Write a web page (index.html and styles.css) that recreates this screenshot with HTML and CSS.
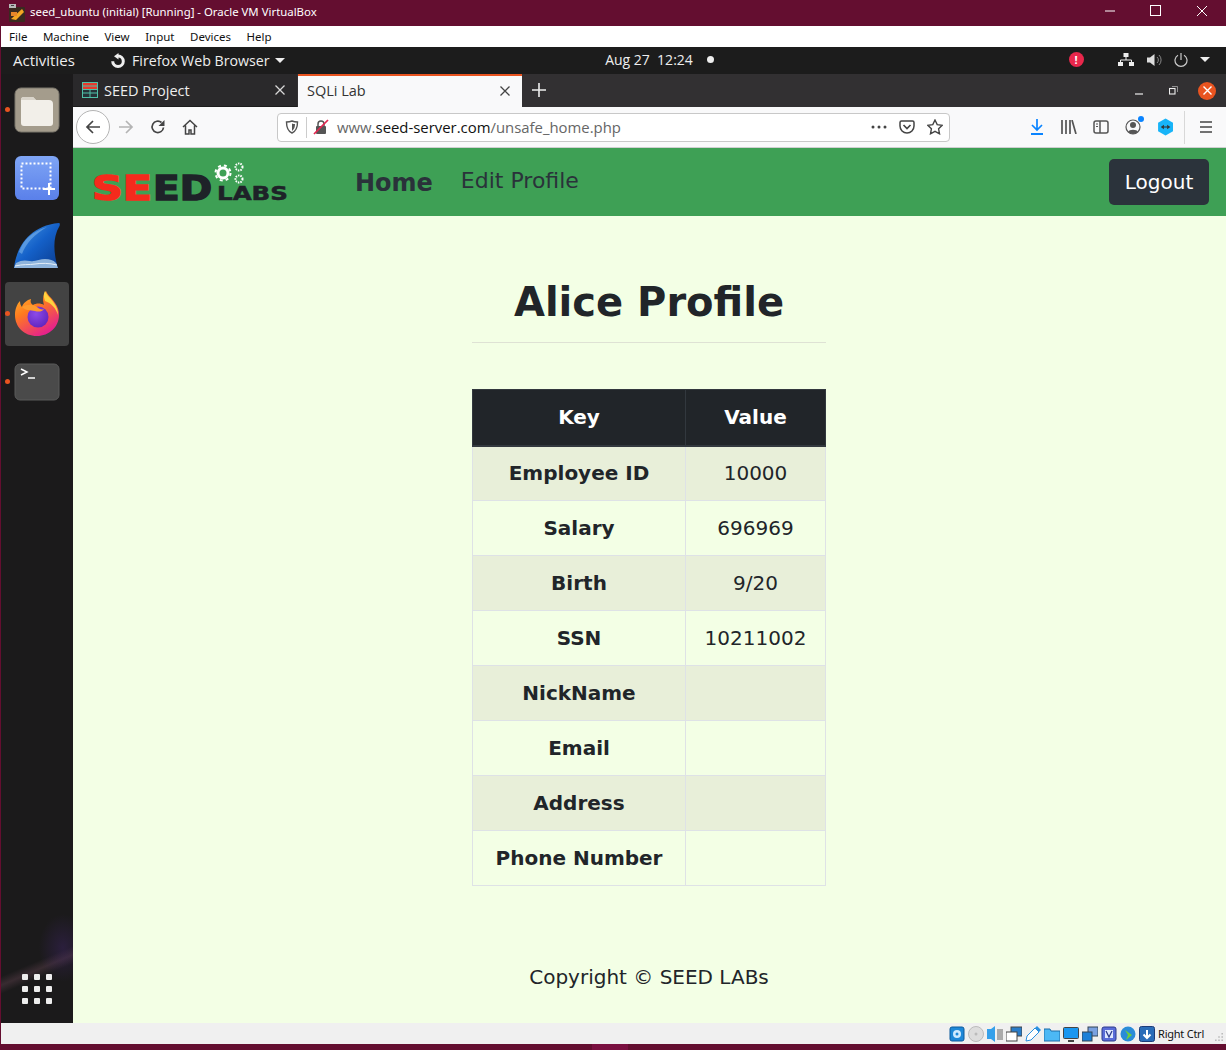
FILE: index.html
```html
<!DOCTYPE html>
<html lang="en">
<head>
<meta charset="utf-8">
<title>seed_ubuntu (initial) [Running] - Oracle VM VirtualBox</title>
<link rel="stylesheet" href="styles.css">
</head>
<body>
<div class="host">
  <header class="titlebar">
    <svg class="vbox-logo" width="18" height="18" viewBox="0 0 18 18"><rect x="1" y="3" width="16" height="15" rx="1" fill="#3a2a20"/><path d="M3 15l11-10 2 3-8 8z" fill="#f5a623"/><path d="M3 8h6v4H3z" fill="#e8862a"/><rect x="1" y="0" width="7" height="4" fill="#b8b8b8"/><rect x="3" y="1" width="3" height="1" fill="#444"/></svg>
    <span class="title-text">seed_ubuntu (initial) [Running] - Oracle VM VirtualBox</span>
    <div class="win-controls">
      <svg width="12" height="12" viewBox="0 0 12 12"><path d="M1 6h10" stroke="#fff" fill="none"/></svg>
      <svg width="12" height="12" viewBox="0 0 12 12"><rect x=".5" y=".5" width="10" height="10" stroke="#fff" fill="none"/></svg>
      <svg width="12" height="12" viewBox="0 0 12 12"><path d="M1 1l10 10M11 1L1 11" stroke="#fff" fill="none"/></svg>
    </div>
  </header>
  <nav class="menubar"><span>File</span><span>Machine</span><span>View</span><span>Input</span><span>Devices</span><span>Help</span></nav>

  <div class="guest">
    <div class="topbar">
      <span class="activities">Activities</span>
      <div class="appmenu">
        <svg width="16" height="16" viewBox="0 0 16 16"><path d="M8 3a5.300 5.300 0 1 1-5.300 5.300" fill="none" stroke="#eee" stroke-width="3"/><path d="M8.500 0L4 3.200 8.500 6.500z" fill="#eee"/></svg>
        <span>Firefox Web Browser</span>
        <i class="caret"></i>
      </div>
      <div class="clock"><span>Aug 27&nbsp; 12:24</span><i class="clock-dot"></i></div>
      <div class="tray">
        <span class="alert">!</span>
        <svg class="t-net" width="16" height="13" viewBox="0 0 16 13"><path d="M5.500 0h5v4h-5zM0 9h5v4H0zM11 9h5v4h-5z" fill="#eee"/><path d="M8 4v3M2.500 9V7h11v2" stroke="#eee" fill="none"/></svg>
        <svg class="t-vol" width="15" height="14" viewBox="0 0 15 14"><path d="M0 4.500h3L7.500 1v12L3 9.500H0z" fill="#ddd"/><path d="M10 4a4 4 0 0 1 0 6M12 2a7 7 0 0 1 0 10" stroke="#888" fill="none"/></svg>
        <svg class="t-pow" width="14" height="14" viewBox="0 0 14 14"><path d="M4 2.200a6 6 0 1 0 6 0M7 0v7" stroke="#ccc" stroke-width="1.200" fill="none"/></svg>
        <i class="caret"></i>
      </div>
    </div>

    <div class="desktop">
      <aside class="dock">
        <div class="dock-item"><i class="run-dot"></i>
          <svg width="46" height="46" viewBox="0 0 46 46"><rect x="1" y="1" width="44" height="44" rx="6" fill="#a49c8c" stroke="#7b766c"/><path d="M7 13a3 3 0 0 1 3-3h9l3 3h13a4 4 0 0 1 4 4v19a3 3 0 0 1-3 3H10a3 3 0 0 1-3-3z" fill="#f2efe9"/><path d="M7 13a3 3 0 0 1 3-3h9l3 3z" fill="#d9d4ca"/></svg>
        </div>
        <div class="dock-item">
          <svg width="46" height="46" viewBox="0 0 46 46"><defs><linearGradient id="sg" x1="0" y1="0" x2="0" y2="1"><stop offset="0" stop-color="#7fa5f5"/><stop offset="1" stop-color="#5a80ea"/></linearGradient></defs><rect x="1" y="1" width="44" height="44" rx="6" fill="url(#sg)"/><rect x="7.500" y="8.500" width="29" height="25" fill="none" stroke="#fff" stroke-width="2" stroke-dasharray="2 2"/><path d="M35 28v12M29 34h12" stroke="#fff" stroke-width="2"/></svg>
        </div>
        <div class="dock-item">
          <svg width="48" height="48" viewBox="0 0 48 48"><defs><linearGradient id="fin" x1="0" y1="0" x2="1" y2="1"><stop offset="0" stop-color="#4a9ce8"/><stop offset=".5" stop-color="#1460c8"/><stop offset="1" stop-color="#0a3a8c"/></linearGradient></defs><path d="M1 46C3 28 14 4 46 1c1 0 1 2 .5 3C38 18 42 36 45 46z" fill="url(#fin)"/><path d="M3 41c5-3 9-3 14-2s10-2 15-2 8 1 11 4l2 5H1z" fill="#8fb4dc"/><path d="M2 44c8-2 14-1 20-2s14-1 22 1" fill="none" stroke="#e4eef8"/><path d="M6 30C10 18 20 9 34 5 22 12 13 21 9 32z" fill="#8cc0f0" opacity=".5"/></svg>
        </div>
        <div class="dock-item active"><i class="run-dot"></i>
          <svg width="46" height="46" viewBox="0 0 46 46"><defs><linearGradient id="ff" x1="0" y1="0" x2=".6" y2="1"><stop offset="0" stop-color="#ffbd2e"/><stop offset=".45" stop-color="#ff7a1f"/><stop offset="1" stop-color="#e5218c"/></linearGradient><radialGradient id="ffb" cx=".4" cy=".35" r=".8"><stop offset="0" stop-color="#8c4ae8"/><stop offset="1" stop-color="#5a1fb8"/></radialGradient></defs><path d="M23 45C10 45 1 36 1 24c0-6 2-11 5-14 0 3 1 5 2 6 1-4 5-7 9-8-1 3 0 5 2 6 3-2 8-2 11 0-1-4-2-9 2-14 2 5 6 7 9 12 3 4 4 8 4 12 0 12-10 21-22 21z" fill="url(#ff)"/><path d="M31 0c2 5 6 7 9 12 3 4 4 8 4 12-2-7-7-12-13-14-1-4-2-6 0-10z" fill="#ffd23f"/><circle cx="24" cy="26" r="10.500" fill="url(#ffb)"/><path d="M8 16c5-3 11-3 15 0 2 2 5 3 7 2-2 3-6 3-9 2-5-1-9 0-13-4z" fill="#ff9a2e"/></svg>
        </div>
        <div class="dock-item"><i class="run-dot"></i>
          <svg width="46" height="46" viewBox="0 0 46 46"><rect x="1" y="5" width="44" height="36" rx="5" fill="#4a4a4a" stroke="#5a5a5a"/><path d="M7 10l6 3-6 3" stroke="#fff" stroke-width="1.500" fill="none"/><path d="M14 19h7" stroke="#fff" stroke-width="1.500"/></svg>
        </div>
        <div class="apps-grid"><i></i><i></i><i></i><i></i><i></i><i></i><i></i><i></i><i></i></div>
      </aside>

      <div class="browser">
        <div class="tabstrip">
          <div class="tab">
            <svg width="16" height="16" viewBox="0 0 16 16"><rect width="16" height="16" fill="#4fc0a8"/><rect x="1" y="1" width="14" height="6" fill="#e8392c"/><rect x="1" y="8" width="14" height="7" fill="#263238"/><path d="M1 4h14M8 8v7M1 11h14" stroke="#4fc0a8"/></svg>
            <span class="tab-label">SEED Project</span>
            <svg class="tab-x" width="12" height="12" viewBox="0 0 12 12"><path d="M1.500 1.500l9 9M10.500 1.500l-9 9" stroke="#d8d8d8" stroke-width="1.300"/></svg>
          </div>
          <div class="tab current">
            <span class="tab-label">SQLi Lab</span>
            <svg class="tab-x" width="12" height="12" viewBox="0 0 12 12"><path d="M1.500 1.500l9 9M10.500 1.500l-9 9" stroke="#444" stroke-width="1.300"/></svg>
          </div>
          <svg class="new-tab" width="14" height="14" viewBox="0 0 14 14"><path d="M7 0v14M0 7h14" stroke="#eee" stroke-width="1.600"/></svg>
          <div class="ff-controls">
            <svg width="9" height="9" viewBox="0 0 9 9"><path d="M0 8h8" stroke="#eee" stroke-width="1.200"/></svg>
            <svg width="9" height="9" viewBox="0 0 9 9"><rect x=".5" y="2.500" width="5.500" height="5.500" fill="none" stroke="#eee" stroke-width="1.100"/><path d="M3 .5h5.500V6" fill="none" stroke="#aaa" stroke-width=".8"/></svg>
            <span class="ff-close"><svg width="9" height="9" viewBox="0 0 9 9"><path d="M.5.500l8 8M8.500.500l-8 8" stroke="#fff" stroke-width="1.400"/></svg></span>
          </div>
        </div>

        <div class="toolbar">
          <span class="back-btn"><svg width="16" height="16" viewBox="0 0 16 16"><path d="M15 8H2M8 2L2 8l6 6" stroke="#444" stroke-width="1.700" fill="none"/></svg></span>
          <svg class="t-fwd" width="16" height="16" viewBox="0 0 16 16"><path d="M1 8h13M8 2l6 6-6 6" stroke="#b4b4b4" stroke-width="1.700" fill="none"/></svg>
          <svg class="t-reload" width="16" height="16" viewBox="0 0 16 16"><path d="M13.500 8.500A5.700 5.700 0 1 1 11.500 3.500" stroke="#444" stroke-width="1.700" fill="none"/><path d="M14.500 1v6h-6z" fill="#444"/></svg>
          <svg class="t-home" width="16" height="16" viewBox="0 0 16 16"><path d="M1 8l7-6.500L15 8M3.500 6.500V15h3.500v-4h2v4h3.500V6.500" stroke="#444" stroke-width="1.500" fill="none"/></svg>
          <div class="urlbar">
            <svg class="u-shield" width="14" height="14" viewBox="0 0 14 14"><path d="M7 1c2 .8 3.500 1 5.500 1 0 5-1 9-5.500 11C2.500 11 1.500 7 1.500 2 3.500 2 5 1.800 7 1z" fill="none" stroke="#555" stroke-width="1.400"/><path d="M7 3.500c1 .4 1.800.5 3 .6C10 7 9.300 9.500 7 11z" fill="#555"/></svg>
            <i class="u-sep"></i>
            <svg class="u-lock" width="16" height="16" viewBox="0 0 16 16"><path d="M5 7V5a3 3 0 0 1 6 0v2" stroke="#555" stroke-width="1.500" fill="none"/><rect x="3" y="7" width="10" height="8" rx="1" fill="#555"/><path d="M1 15L15 1" stroke="#e22850" stroke-width="1.700"/></svg>
            <span class="url"><span class="dim">www.</span>seed-server.com<span class="dim">/unsafe_home.php</span></span>
            <div class="url-actions">
              <svg width="16" height="4" viewBox="0 0 16 4"><circle cx="2" cy="2" r="1.500" fill="#444"/><circle cx="8" cy="2" r="1.500" fill="#444"/><circle cx="14" cy="2" r="1.500" fill="#444"/></svg>
              <svg width="16" height="14" viewBox="0 0 16 14"><path d="M1 2.500A1.500 1.500 0 0 1 2.500 1h11A1.500 1.500 0 0 1 15 2.500V6a7 7 0 0 1-14 0z" fill="none" stroke="#444" stroke-width="1.500"/><path d="M4.500 5L8 8.500 11.500 5" fill="none" stroke="#444" stroke-width="1.700"/></svg>
              <svg width="16" height="16" viewBox="0 0 16 16"><path d="M8 1l2.200 4.600 5 .7-3.600 3.500.9 5L8 12.400 3.500 14.800l.9-5L.8 6.300l5-.7z" fill="none" stroke="#444" stroke-width="1.400"/></svg>
            </div>
          </div>
          <div class="tools">
            <svg width="16" height="16" viewBox="-1 0 16 16"><path d="M7 0v11M2 6l5 5 5-5" fill="none" stroke="#0a84ff" stroke-width="1.700"/><path d="M1 15h12" stroke="#0a84ff" stroke-width="2"/></svg>
            <svg width="16" height="14" viewBox="0 0 16 14"><path d="M1 0v14M5 0v14M9 0v14M11 0l4 14" stroke="#555" stroke-width="1.700" fill="none"/></svg>
            <svg width="16" height="14" viewBox="0 0 16 14"><rect x="1" y="1" width="14" height="12" rx="2" fill="none" stroke="#555" stroke-width="1.500"/><path d="M7 1v12" stroke="#555" stroke-width="1.500"/><path d="M3 4h2M3 6.500h2" stroke="#555"/></svg>
            <span class="acct"><svg width="16" height="16" viewBox="0 0 16 16"><circle cx="8" cy="8" r="7" fill="none" stroke="#555" stroke-width="1.200"/><circle cx="8" cy="6" r="3" fill="#555"/><path d="M3 13c1-3 9-3 10 0a7 7 0 0 1-10 0z" fill="#555"/></svg><i class="acct-dot"></i></span>
            <svg width="16" height="18" viewBox="-.5 0 15 16"><path d="M7.500 0l7 4v8l-7 4-7-4V4z" fill="#18b4f8"/><path d="M3 8l3-2v4zM12 8L9 6v4z" fill="#333"/><path d="M6 8h3" stroke="#333"/></svg>
            <i class="tool-sep"></i>
            <svg class="burger" width="14" height="12" viewBox="0 0 14 12"><path d="M1 1h12M1 6h12M1 11h12" stroke="#444" stroke-width="1.700"/></svg>
          </div>
        </div>

        <div class="page">
          <nav class="navbar">
            <svg class="logo" width="200" height="60" viewBox="0 0 200 60">
              <text class="logo-seed" x="0" y="48" textLength="60" lengthAdjust="spacingAndGlyphs" fill="#f52a1c" stroke="#f52a1c">SE</text>
              <text class="logo-seed" x="61" y="48" textLength="59" lengthAdjust="spacingAndGlyphs" fill="#1e2228" stroke="#1e2228">ED</text>
              <text class="logo-labs" x="125" y="48" textLength="71" lengthAdjust="spacingAndGlyphs" fill="#1e2228" stroke="#1e2228">LABS</text>
              <g fill="none" stroke="#fff"><circle cx="131" cy="21" r="5" stroke-width="3"/><circle cx="131" cy="21" r="7.500" stroke-width="2" stroke-dasharray="3 3"/><circle cx="147" cy="15" r="3.500" stroke-width="2" stroke-dasharray="1.500 1"/><circle cx="147" cy="27" r="3.500" stroke-width="2" stroke-dasharray="1.500 1"/></g>
            </svg>
            <a class="nav-home">Home</a>
            <a class="nav-edit">Edit Profile</a>
            <button class="logout">Logout</button>
          </nav>
          <main class="content">
            <h1>Alice Profile</h1>
            <hr>
            <table>
              <thead><tr><th>Key</th><th>Value</th></tr></thead>
              <tbody>
                <tr><th>Employee ID</th><td>10000</td></tr>
                <tr><th>Salary</th><td>696969</td></tr>
                <tr><th>Birth</th><td>9/20</td></tr>
                <tr><th>SSN</th><td>10211002</td></tr>
                <tr><th>NickName</th><td></td></tr>
                <tr><th>Email</th><td></td></tr>
                <tr><th>Address</th><td></td></tr>
                <tr><th>Phone Number</th><td></td></tr>
              </tbody>
            </table>
            <p class="copyright">Copyright © SEED LABs</p>
          </main>
        </div>
      </div>
    </div>
  </div>

  <footer class="statusbar">
    <svg width="16" height="16" viewBox="0 0 16 16"><rect x="1" y="1" width="14" height="14" rx="2" fill="#1e88d8" stroke="#0c5a9c"/><circle cx="8" cy="8" r="4" fill="#cfeaff"/><circle cx="8" cy="8" r="1.500" fill="#1e88d8"/></svg>
    <svg width="16" height="16" viewBox="0 0 16 16"><circle cx="8" cy="8" r="7.500" fill="#ddd" stroke="#bbb"/><circle cx="8" cy="8" r="1.500" fill="#bbb"/></svg>
    <svg width="16" height="16" viewBox="0 0 16 16"><path d="M0 3h4l4-3v16l-4-3H0z" fill="#35a0ea"/><path d="M10 3h6v11h-6z" fill="#aaa"/></svg>
    <svg width="16" height="16" viewBox="0 0 16 16"><rect x="5" y="1" width="11" height="9" fill="#2a7cc8" stroke="#444"/><rect x="0" y="6" width="11" height="9" fill="#fff" stroke="#444"/></svg>
    <svg width="16" height="16" viewBox="0 0 16 16"><path d="M1 15l1-5 8-8 4 4-8 8z" fill="#fff" stroke="#2a90e0"/><path d="M10 2l2-2 4 4-2 2z" fill="#2a90e0"/></svg>
    <svg width="16" height="16" viewBox="0 0 16 16"><path d="M0 3h6l1 2h9v10H0z" fill="#4cb8f5" stroke="#1c6ca8"/></svg>
    <svg width="16" height="16" viewBox="0 0 16 16"><rect x=".5" y="1.500" width="15" height="11" rx="1" fill="#1a96f0" stroke="#444"/><path d="M5 15h6" stroke="#444" stroke-width="2"/></svg>
    <svg width="16" height="16" viewBox="0 0 16 16"><rect x="6" y="1" width="10" height="9" fill="#7aa0e0" stroke="#345"/><rect x="0" y="6" width="10" height="9" fill="#1c80d8" stroke="#345"/></svg>
    <svg width="16" height="16" viewBox="0 0 16 16"><rect x="1" y="1" width="14" height="14" rx="2" fill="#5a6cd8" stroke="#2c3a8c"/><rect x="4" y="4" width="8" height="8" fill="#e0e8ff"/><path d="M5 5l3 6 3-6" fill="none" stroke="#2c3a8c" stroke-width="1.300"/></svg>
    <svg width="16" height="16" viewBox="0 0 16 16"><circle cx="8" cy="8" r="7.500" fill="#2a8cd8"/><path d="M5 4l7 5-6 5 2-5z" fill="#6cd03c"/></svg>
    <svg width="16" height="16" viewBox="0 0 16 16"><rect x=".5" y=".5" width="15" height="15" rx="2" fill="#2a6cb8" stroke="#1c3c78"/><path d="M8 4v8M4.500 8.500L8 12l3.500-3.500" fill="none" stroke="#fff" stroke-width="2"/></svg>
    <span class="right-ctrl">Right Ctrl</span>
    <svg class="grip" width="8" height="8" viewBox="0 0 10 10"><path d="M8 0h2v2H8zM4 4h2v2H4zM8 4h2v2H8zM0 8h2v2H0zM4 8h2v2H4zM8 8h2v2H8z" fill="#bbb"/></svg>
  </footer>
  <div class="host-bottom"><i></i></div>
</div>
</body>
</html>
```
FILE: styles.css
```css
* { box-sizing: border-box; }
html, body { margin: 0; padding: 0; }
body { background: #640e30; overflow: hidden; }
i { display: block; }
.host { width: 1226px; height: 1050px; display: flex; flex-direction: column; font-family: "Noto Sans", sans-serif; }

.titlebar { height: 26px; flex: none; display: flex; align-items: center; padding: 0 0 4px 8px; color: #fff; font-size: 11.400px; }
.vbox-logo { margin-right: 4px; margin-top: 4px; }
.win-controls { margin-left: auto; display: flex; gap: 34px; padding-right: 18px; }

.menubar { height: 21px; flex: none; background: #fff; display: flex; align-items: center; gap: 15.500px; padding: 0 0 1px 8px; margin-left: 1px; font-size: 11.500px; color: #111; }

.guest { flex: 1; min-height: 0; margin-left: 1px; display: flex; flex-direction: column; }
.topbar { height: 27px; flex: none; background: #1c1c1c; color: #eee; font-family: "Open Sans", sans-serif; font-size: 14px; display: grid; grid-template-columns: 1fr auto 1fr; align-items: center; position: relative; padding-bottom: 2px; }
.activities { position: absolute; left: 12px; top: 3px; font-size: 15px; }
.appmenu { position: absolute; left: 109px; top: 4px; display: flex; align-items: center; gap: 6px; font-size: 14.200px; }
.caret { width: 0; height: 0; border-left: 5px solid transparent; border-right: 5px solid transparent; border-top: 5px solid #eee; }
.appmenu .caret { margin-left: -1px; }
.clock { grid-column: 2; display: flex; align-items: center; gap: 14px; margin-left: 92px; }
.clock-dot { width: 7px; height: 7px; background: #eee; border-radius: 50%; }
.tray { position: absolute; right: 16px; top: 5px; display: flex; align-items: center; }
.alert { width: 15px; height: 15px; border-radius: 50%; background: #e8274b; color: #fff; font-size: 11px; font-weight: 700; line-height: 15px; text-align: center; margin-right: 34.500px; }
.t-net { margin-right: 12.500px; }
.t-vol { margin-right: 12.500px; }
.t-pow { margin-right: 12px; }

.desktop { flex: 1; min-height: 0; display: flex; }
.dock { width: 72px; flex: none; background:
    radial-gradient(ellipse 24px 34px at 62px 874px, rgba(66, 38, 110, .4), transparent),
    linear-gradient(157deg, transparent 42%, rgba(85, 60, 70, .5) 50%, transparent 58%) 0 856px / 72px 80px no-repeat,
    #1b1a1b;
  display: flex; flex-direction: column; align-items: center; padding-top: 4px; gap: 4px; }
.dock-item { position: relative; width: 64px; height: 64px; display: flex; align-items: center; justify-content: center; border-radius: 4px; }
.dock-item.active { background: #434343; }
.run-dot { position: absolute; left: 0; top: 29px; width: 5px; height: 5px; border-radius: 50%; background: #e95420; }
.apps-grid { margin-top: auto; margin-bottom: 19px; display: grid; grid-template-columns: repeat(3, 6px); gap: 6px; }
.apps-grid i { height: 6px; background: #eee; border-radius: 1px; }

.browser { flex: 1; min-width: 0; display: flex; flex-direction: column; }
.tabstrip { height: 33px; flex: none; background: #323032; display: flex; align-items: stretch; gap: 1px; color: #eee; font-family: "Open Sans", sans-serif; font-size: 14.500px; }
.tab { width: 224px; background: #2a292b; display: flex; align-items: center; padding: 0 11px 0 9px; gap: 6px; border-bottom: 1px solid #1c1c1c; }
.tab-x { margin-left: auto; }
.tab.current { background: #f9f9fa; color: #333; border-top: 2px solid #e95420; border-bottom: 0; padding-bottom: 2px; }
.new-tab { align-self: center; margin: -2px 0 0 9px; }
.ff-controls { margin-left: auto; display: flex; align-items: center; gap: 25px; padding-right: 10px; }
.ff-close { width: 18px; height: 18px; background: #e95420; border-radius: 50%; display: flex; align-items: center; justify-content: center; margin-left: -5px; }

.toolbar { height: 41px; flex: none; background: #f9f9fa; border-bottom: 1px solid #cfcfd0; display: flex; align-items: center; padding-left: 3px; }
.back-btn { width: 34px; height: 34px; border: 1px solid #b4b4b4; border-radius: 50%; display: flex; align-items: center; justify-content: center; background: #fff; }
.t-fwd { margin-left: 8px; }
.t-reload { margin-left: 16px; }
.t-home { margin-left: 16px; }
.urlbar { margin-left: 79px; width: 673px; height: 29px; background: #fff; border: 1px solid #c8c8c8; border-radius: 4px; display: flex; align-items: center; padding-left: 7px; font-family: "Open Sans", sans-serif; font-size: 14.900px; color: #111; }
.u-sep { width: 1px; height: 21px; background: #ccc; margin: 0 6px 0 7px; }
.u-lock { margin-right: 8px; }
.dim { color: #666; }
.url-actions { margin-left: auto; display: flex; align-items: center; gap: 12px; padding-right: 6px; }
.tools { margin-left: 79px; display: flex; align-items: center; gap: 16px; }
.acct { position: relative; display: flex; }
.acct-dot { position: absolute; right: -3px; top: -3px; width: 6px; height: 6px; border-radius: 50%; background: #0a84ff; }
.tool-sep { width: 1px; height: 33px; background: #d8d8d8; margin-left: -5px; }
.burger { margin-left: -2px; }

.page { flex: 1; min-height: 0; background: #f3ffe5; display: flex; flex-direction: column; font-family: "DejaVu Sans", sans-serif; color: #212529; }
.navbar { height: 68px; flex: none; background: #3ea055; display: flex; align-items: center; padding: 0 17px 0 19px; color: #2a323a; }
.logo { margin-right: 63px; }
.logo-seed { font-family: "DejaVu Sans", sans-serif; font-weight: 700; font-size: 34px; stroke-width: 1.500px; }
.logo-labs { font-family: "DejaVu Sans", sans-serif; font-weight: 700; font-size: 19px; stroke-width: .5px; }
.nav-home { font-size: 24px; font-weight: 700; margin: 2px 28px 0 0; }
.nav-edit { font-size: 22px; margin-top: -4px; }
.logout { margin-left: auto; width: 100px; height: 46px; background: #2b333b; color: #fff; border: 0; border-radius: 5px; font: 20px "DejaVu Sans", sans-serif; }

.content { width: 354px; margin: 0 0 0 399px; flex: 1; display: flex; flex-direction: column; }
h1 { margin: 62px 0 0; font-size: 40px; line-height: 48px; font-weight: 700; text-align: center; white-space: nowrap; }
hr { width: 100%; margin: 16px 0 46px; border: 0; border-top: 1px solid #dee2d4; }
table { width: 354px; border-collapse: collapse; font-size: 20px; table-layout: fixed; }
th, td { border: 1px solid #dee2e6; padding: 0; height: 55px; text-align: center; white-space: nowrap; }
th:first-child { width: 213px; }
thead th { background: #212529; color: #fff; border-color: #32383e; border-bottom-width: 2px; height: 56px; }
tbody tr:nth-child(odd) { background: #e8efd9; }
.copyright { margin: 79px 0 0; font-size: 20px; line-height: 24px; text-align: center; white-space: nowrap; }

.statusbar { height: 21px; flex: none; margin-left: 1px; background: #f0f0f0; display: flex; align-items: center; justify-content: flex-end; gap: 3px; padding-right: 3px; font-size: 11px; color: #111; }
.right-ctrl { margin-right: 8px; letter-spacing: -.25px; }
.grip { margin-top: 7px; }
.host-bottom { height: 6px; flex: none; display: flex; justify-content: center; }
.host-bottom i { width: 36px; height: 6px; background: #7a1040; margin-left: -6px; }
```
